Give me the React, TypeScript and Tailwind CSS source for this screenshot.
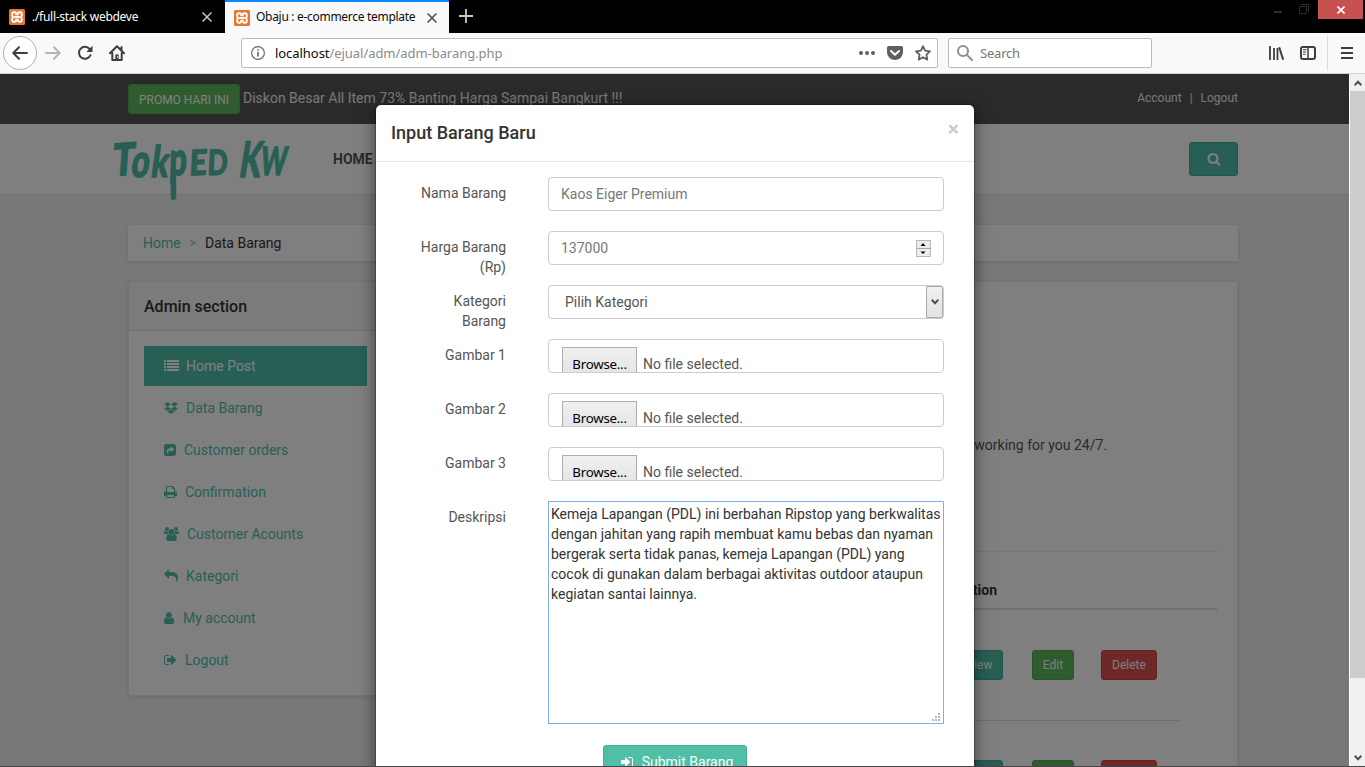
import React from "react";
import { FaDropbox } from "react-icons/fa";

function Glyph({ d, flip, className }: { d: string; flip?: boolean; className?: string }) {
  return (
    <svg viewBox="0 0 1792 1792" className={className ?? "h-3.5 w-3.5"} fill="currentColor">
      <path d={d} transform={flip ? "translate(1792 0) scale(-1 1)" : undefined} />
    </svg>
  );
}

const USER =
  "M1280 1399q0 109-62.5 187t-150.5 78h-854q-88 0-150.5-78t-62.5-187q0-85 8.5-160.5t31.5-152 58.5-131 94-89 134.5-34.5q131 128 313 128t313-128q76 0 134.5 34.5t94 89 58.5 131 31.5 152 8.5 160.5zm-256-887q0 159-112.5 271.5t-271.5 112.5-271.5-112.5-112.5-271.5 112.5-271.5 271.5-112.5 271.5 112.5 112.5 271.5z";
const SEARCH =
  "M1216 832q0-185-131.5-316.5t-316.5-131.5-316.5 131.5-131.5 316.5 131.5 316.5 316.5 131.5 316.5-131.5 131.5-316.5zm512 832q0 52-38 90t-90 38q-54 0-90-38l-343-342q-179 124-399 124-143 0-273.5-55.5t-225-150-150-225-55.5-273.5 55.5-273.5 150-225 225-150 273.5-55.5 273.5 55.5 225 150 150 225 55.5 273.5q0 220-124 399l343 343q37 37 37 90z";
const FORWARD =
  "M1792 640q0 26-19 45l-512 512q-19 19-45 19t-45-19-19-45v-256h-224q-98 0-175.5 6t-154 21.5-133 42.5-105.5 69.5-80 101-48.5 138.5-17.5 181q0 55 5 123 0 6 2.5 23.5t2.5 26.5q0 15-8.5 25t-23.5 10q-16 0-28-17-7-9-13-22t-13.5-30-10.5-24q-127-285-127-451 0-199 53-333 162-403 875-403h224v-256q0-26 19-45t45-19 45 19l512 512q19 19 19 45z";
const SIGN_OUT =
  "M640 1440q0 4 1 20t.5 26.5-3 23.5-10 19.5-20.5 6.5h-320q-119 0-203.5-84.5t-84.5-203.5v-704q0-119 84.5-203.5t203.5-84.5h320q13 0 22.5 9.5t9.5 22.5q0 4 1 20t.5 26.5-3 23.5-10 19.5-20.5 6.5h-320q-66 0-113 47t-47 113v704q0 66 47 113t113 47h312l11.5 1 11.5 3 8 5.5 7 9 2 13.5zm928-544q0 26-19 45l-544 544q-19 19-45 19t-45-19-19-45v-288h-448q-26 0-45-19t-19-45v-384q0-26 19-45t45-19h448v-288q0-26 19-45t45-19 45 19l544 544q19 19 19 45z";
const SIGN_IN =
  "M1312 896q0 26-19 45l-544 544q-19 19-45 19t-45-19-19-45v-288h-448q-26 0-45-19t-19-45v-384q0-26 19-45t45-19h448v-288q0-26 19-45t45-19 45 19l544 544q19 19 19 45zm352-352v704q0 119-84.5 203.5t-203.5 84.5h-320q-13 0-22.5-9.5t-9.5-22.5q0-4-1-20t-.5-26.5 3-23.5 10-19.5 20.5-6.5h320q66 0 113-47t47-113v-704q0-66-47-113t-113-47h-312l-11.5-1-11.5-3-8-5.5-7-9-2-13.5q0-4-1-20t-.5-26.5 3-23.5 10-19.5 20.5-6.5h320q119 0 203.5 84.5t84.5 203.5z";
const PRINT =
  "M384 1536h896v-256h-896v256zm0-640h896v-384h-160q-40 0-68-28t-28-68v-160h-640v640zm1152 64q0-26-19-45t-45-19-45 19-19 45 19 45 45 19 45-19 19-45zm128 0v416q0 13-9.5 22.5t-22.5 9.5h-224v160q0 40-28 68t-68 28h-960q-40 0-68-28t-28-68v-160h-224q-13 0-22.500-9.500t-9.500-22.500v-416q0-79 56.500-135.500t135.500-56.500h64v-544q0-40 28-68t68-28h672q40 0 88 20t76 48l152 152q28 28 48 76t20 88v256h64q79 0 135.500 56.500t56.500 135.500z";

function ListIcon() {
  return (
    <svg viewBox="0 0 15 14" className="h-3.5 w-[15px]" fill="currentColor" shapeRendering="crispEdges">
      {[1, 4, 7, 10].map((y) => (
        <g key={y}>
          <rect x="0" y={y} width="2" height="2" />
          <rect x="3" y={y} width="12" height="2" />
        </g>
      ))}
    </svg>
  );
}

function ShareSquare() {
  return (
    <svg viewBox="0 0 12 12" className="h-3 w-3">
      <rect width="12" height="12" rx="2.3" fill="currentColor" />
      <path d="M6.8 2.2 10.4 5.2 6.8 8.2V6.5C4.6 6.4 3.7 7.4 4.3 10.2 1.9 7.6 2.5 4 6.8 3.9Z" fill="#fff" />
    </svg>
  );
}

function GroupIcon() {
  return (
    <svg viewBox="0 0 15 14" className="h-3.5 w-[15px]" fill="currentColor">
      <circle cx="3" cy="2" r="2" />
      <circle cx="12" cy="2" r="2" />
      <path d="M0 6.2C0 4.7.5 4 1.2 4.1c1 .7 2 .7 3 .2-.2 1 .1 1.9.6 2.7H1.5C.6 7 0 6.8 0 6.2ZM15 6.2c0-1.500-.5-2.200-1.200-2.100-1 .7-2 .7-3 .2.2 1-.1 1.900-.6 2.700h3.300c.9 0 1.500-.2 1.500-.8Z" />
      <circle cx="7.5" cy="4.900" r="2.900" />
      <path d="M2.200 11.500c0-2.500.8-4.200 2.500-4.200 1.700 1.500 3.900 1.500 5.600 0 1.700 0 2.500 1.700 2.500 4.200 0 1.700-.8 2.500-2 2.500H4.200c-1.200 0-2-.8-2-2.500Z" />
    </svg>
  );
}

function Favicon() {
  return (
    <svg viewBox="0 0 16 16" className="h-4 w-4 shrink-0">
      <rect width="16" height="16" rx="1.500" fill="#e8762c" />
      <g fill="none" stroke="#fff" strokeWidth="1.900">
        <path d="M7.200 6.300V4.700c0-.9-.5-1.400-1.400-1.400H4.600c-.9 0-1.400.5-1.400 1.400v1.600c0 .9.6 1.600 1.400 1.700-.8.1-1.400.8-1.400 1.700v1.600c0 .9.5 1.400 1.400 1.400h1.200c.9 0 1.400-.5 1.400-1.400V9.700" />
        <path d="M8.800 6.300V4.700c0-.9.5-1.400 1.400-1.400h1.200c.9 0 1.400.5 1.400 1.400v1.600c0 .9-.6 1.600-1.400 1.700.8.1 1.400.8 1.400 1.700v1.600c0 .9-.5 1.400-1.400 1.400h-1.200c-.9 0-1.400-.5-1.400-1.400V9.700" />
        <path d="M5 8h6" />
      </g>
    </svg>
  );
}

function Cross({ color }: { color: string }) {
  return (
    <svg viewBox="0 0 10 10" className="h-2.5 w-2.5 shrink-0" stroke={color} strokeWidth="1.500">
      <path d="M.5.5l9 9M9.500.5l-9 9" />
    </svg>
  );
}

function TabStrip() {
  return (
    <div className="flex h-[33px] shrink-0 bg-black text-[12px] font-['Noto_Sans','Open_Sans',sans-serif]">
      <div className="flex w-[225px] items-center pl-[9px] pr-[13px] text-white">
        <Favicon />
        <span className="ml-[7px] grow whitespace-nowrap tracking-[-0.28px]">./full-stack webdeve</span>
        <Cross color="#c8c8c8" />
      </div>
      <div className="flex w-[224px] items-center border-t-2 border-[#0a84ff] bg-[#f9f9fa] pl-[9px] pr-3 text-[#0c0c0d]">
        <Favicon />
        <span className="-mt-0.5 ml-1.5 grow whitespace-nowrap tracking-[-0.3px]">Obaju : e-commerce template</span>
        <Cross color="#4a4a4f" />
      </div>
      <svg viewBox="0 0 14 14" className="ml-[10px] mt-[9px] h-3.5 w-3.5" stroke="#c8c8c8" strokeWidth="1.800">
        <path d="M7 0v14M0 7h14" />
      </svg>
      <div className="ml-auto flex items-start pr-0.5">
        <svg viewBox="0 0 40 19" className="mr-[6px] h-[19px] w-10" fill="none" stroke="#2c2c2c">
          <path d="M2 12h8" strokeWidth="2" />
          <path d="M27.500 6.500h7v7h-7zM29 4.500h7.500v7.500" />
        </svg>
        <div className="flex h-[19px] w-[45px] items-center justify-center bg-[#c75050]">
          <svg viewBox="0 0 8 8" className="h-2 w-2" stroke="#fff" strokeWidth="1.600">
            <path d="M.5.5l7 7M7.500.5l-7 7" />
          </svg>
        </div>
      </div>
    </div>
  );
}

function Toolbar() {
  return (
    <div className="flex h-[41px] shrink-0 items-center border-b border-[#d2d2d3] bg-[#f9f9fa] pb-px font-['Noto_Sans','Open_Sans',sans-serif] text-[13px] text-[#4a4a4f]">
      <div className="ml-[3px] flex h-[34px] w-[34px] items-center justify-center rounded-full border border-[#b1b1b1] bg-white">
        <svg viewBox="0 0 16 16" className="h-4 w-4" fill="none" stroke="#3d3d42" strokeWidth="2" strokeLinecap="round" strokeLinejoin="round">
          <path d="M15 8H1.500M7 2.200 1.300 8 7 13.800" />
        </svg>
      </div>
      <svg viewBox="0 0 16 16" className="ml-2 h-4 w-4" fill="none" stroke="#b5b5b7" strokeWidth="2" strokeLinecap="round" strokeLinejoin="round">
        <path d="M1 8h13.500M9 2.200 14.700 8 9 13.800" />
      </svg>
      <svg viewBox="0 0 16 16" className="ml-4 h-4 w-4" fill="none" stroke="#3d3d42" strokeWidth="2">
        <path d="M13.500 10.200A6 6 0 1 1 12.600 4" strokeLinecap="round" />
        <path d="M15.500.8V7H9.300z" fill="#3d3d42" stroke="none" />
      </svg>
      <svg viewBox="0 0 16 16" className="ml-4 h-4 w-4" fill="none" stroke="#3d3d42" strokeWidth="2" strokeLinejoin="round" strokeLinecap="round">
        <path d="M1 8.200 8 1.300l7 6.900M3.300 8v7h9.400V8M12.500 2v2.500" />
        <path d="M6.300 15V9.500h3.400V15z" fill="#3d3d42" stroke="none" />
        <path d="M8.600 11.500v1.200" stroke="#fff" strokeWidth=".8" />
      </svg>
      <div className="ml-[116px] flex h-[30px] w-[697px] items-center rounded-[2px] border border-[#bcbcbd] bg-white pl-[9px] pr-[6px]">
        <svg viewBox="0 0 14 14" className="h-3.5 w-3.5" fill="none" stroke="#6a6a6d">
          <circle cx="7" cy="7" r="6.400" strokeWidth="1.200" />
          <path d="M7 6v4.500M7 3.300v1.500" strokeWidth="1.700" />
        </svg>
        <span className="ml-[10px] grow whitespace-nowrap pt-[3px] tracking-[-0.05px] text-[#8a8a8c]">
          <span className="text-[#0c0c0d]">localhost</span>/ejual/adm/adm-barang.php
        </span>
        <svg viewBox="0 0 16 4" className="h-1 w-4" fill="#5f5f63">
          <circle cx="2" cy="2" r="2" />
          <circle cx="8" cy="2" r="2" />
          <circle cx="14" cy="2" r="2" />
        </svg>
        <svg viewBox="0 0 16 14" className="ml-3 h-3.5 w-4">
          <path d="M1.500 0h13Q16 0 16 1.500V6a8 8 0 0 1-16 0V1.500Q0 0 1.500 0Z" fill="#5f5f63" />
          <path d="m4 5 4 3.800L12 5" fill="none" stroke="#fff" strokeWidth="2" strokeLinecap="round" strokeLinejoin="round" />
        </svg>
        <svg viewBox="0 0 16 16" className="ml-3 h-4 w-4" fill="none" stroke="#5f5f63" strokeWidth="1.800" strokeLinejoin="round">
          <path d="m8 1.200 2.100 4.500 4.900.6-3.600 3.400.9 4.900L8 12.200l-4.300 2.400.9-4.900L1 6.300l4.900-.6z" />
        </svg>
      </div>
      <div className="ml-[10px] flex h-[30px] w-[204px] items-center rounded-[2px] border border-[#bcbcbd] bg-white pl-2">
        <svg viewBox="0 0 16 16" className="h-4 w-4" fill="none" stroke="#8f8f91" strokeWidth="2" strokeLinecap="round">
          <circle cx="6" cy="6" r="5" />
          <path d="m10 10 5 5" />
        </svg>
        <span className="ml-[7px] pt-[3px] tracking-[-0.2px] text-[#767678]">Search</span>
      </div>
      <svg viewBox="0 0 16 14" className="ml-auto h-3.5 w-4" stroke="#3d3d42" strokeWidth="2" fill="none">
        <path d="M1 0v14M5 2v12M8.500 2v12" strokeWidth="1.800" />
        <path d="m10.200 1.300 4 12.400" />
      </svg>
      <svg viewBox="0 0 16 14" className="ml-[15px] h-3.5 w-4" fill="none" stroke="#3d3d42">
        <rect x="1" y="1" width="14" height="12" rx="2" strokeWidth="2" />
        <path d="M8 1v12" strokeWidth="1.500" />
        <path d="M3 3.700h3.500M3 6h3M3 8.300h2.500" />
      </svg>
      <div className="ml-[11px] h-[34px] w-px bg-[#dcdcdd]" />
      <svg viewBox="0 0 12 12" className="ml-[13px] mr-3 h-3 w-3" stroke="#3d3d42" strokeWidth="2">
        <path d="M0 1h12M0 6h12M0 11h12" />
      </svg>
    </div>
  );
}

function Logo() {
  return (
    <svg viewBox="0 -14 180 90" className="-ml-[18px] h-[90px] w-[180px] shrink-0 overflow-visible font-['Lato','Open_Sans',sans-serif]" fill="#50bfa8" stroke="#50bfa8" strokeWidth="1.300" strokeLinejoin="round" strokeLinecap="round" fontWeight="900" fontSize="40">
      <text transform="translate(2 38) rotate(-4) skewX(-8) scale(.92 1.1)">T</text>
      <text transform="translate(20 38.500) skewX(-8) scale(.78 1.150)">o</text>
      <text transform="translate(40 38.500) skewX(-8) scale(.78 1.080)">k</text>
      <text transform="translate(59 37) skewX(-2) scale(.76 1.150)">p</text>
      <path d="M63.500 40 63.500 59.500" strokeWidth="5.500" />
      <text transform="translate(79 37.500) rotate(-3) skewX(-6) scale(.76 .88)">E</text>
      <text transform="translate(97 37) skewX(-3) scale(.66 .88)">D</text>
      <text transform="translate(128 39) skewX(-9) scale(.76 1.220)">K</text>
      <text transform="translate(149 36.500) skewX(-8) scale(.62 .98)">W</text>
    </svg>
  );
}

const MENU = [
  { label: "Home Post", icon: <ListIcon />, gap: "gap-[7px]" },
  { label: "Data Barang", icon: <FaDropbox className="h-3.5 w-3.5" />, gap: "gap-2" },
  { label: "Customer orders", icon: <ShareSquare />, gap: "gap-2" },
  { label: "Confirmation", icon: <Glyph d={PRINT} />, gap: "gap-[7px]" },
  { label: "Customer Acounts", icon: <GroupIcon />, gap: "gap-2" },
  { label: "Kategori", icon: <Glyph d={FORWARD} flip />, gap: "gap-2" },
  { label: "My account", icon: <Glyph d={USER} />, gap: "gap-[5px]" },
  { label: "Logout", icon: <Glyph d={SIGN_OUT} />, gap: "gap-[7px]" },
];

function ActionButtons() {
  return (
    <div className="flex h-[30px] text-[12px] leading-[18px] text-white">
      <span className="w-[47px] rounded-[3px] border border-[#41af98] bg-[#4fbfa8] py-[5px] text-center">View</span>
      <span className="ml-[29px] w-[42px] rounded-[3px] border border-[#4cae4c] bg-[#5cb85c] py-[5px] text-center">Edit</span>
      <span className="ml-[27px] w-[56px] rounded-[3px] border border-[#d43f3a] bg-[#d9534f] py-[5px] text-center">Delete</span>
    </div>
  );
}

function Site() {
  return (
    <div className="flex h-full flex-col bg-[#f0f0f0]">
      <div className="h-[50px] shrink-0 bg-[#555]">
        <div className="mx-auto flex w-[1110px] pt-[10px] text-[#eee]">
          <span className="h-[30px] w-28 rounded-[3px] border border-[#4cae4c] bg-[#5cb85c] pt-[6px] text-center text-[12px] leading-[18px] text-white">PROMO HARI INI</span>
          <span className="ml-[3px] grow pt-1">Diskon Besar All Item 73% Banting Harga Sampai Bangkurt !!!</span>
          <span className="flex gap-2 pt-1 text-[12px]">
            <span>Account</span>
            <span>|</span>
            <span>Logout</span>
          </span>
        </div>
      </div>
      <div className="h-[71px] shrink-0 border-b border-[#e0e0e0] bg-white">
        <div className="mx-auto flex w-[1110px] items-start">
          <Logo />
          <span className="ml-[43px] pt-[25px] font-bold text-[#555]">HOME</span>
          <span className="ml-auto mt-[18px] flex h-[34px] w-[49px] items-center justify-center rounded-[3px] border border-[#41af98] bg-[#4fbfa8] text-white">
            <Glyph d={SEARCH} />
          </span>
        </div>
      </div>
      <div className="mx-auto flex w-[1110px] flex-col">
        <div className="mt-[30px] flex h-9 items-center bg-white px-[15px] shadow-[0_1px_5px_rgba(0,0,0,0.1)]">
          <span className="text-[#4fbfa8]">Home</span>
          <span className="ml-[9px] mr-[9px] text-[12px] text-[#aaa]">&gt;</span>
          <span className="text-[#333]">Data Barang</span>
        </div>
        <div className="mt-5 flex items-start justify-between">
          <div className="w-[255px] rounded-[3px] border border-[#e6e6e6] bg-white pb-[15px] shadow-[0_1px_5px_rgba(0,0,0,0.1)]">
            <div className="flex h-[49px] items-center border-b border-[#ddd] bg-[#f7f7f7] px-[15px] pt-0.5 text-[16px] font-medium text-[#333]">Admin section</div>
            <div className="flex flex-col gap-0.5 pl-[15px] pr-[15px] pt-[15px]">
              {MENU.map((m, i) => (
                <div key={m.label} className={`flex h-10 items-center pl-5 ${m.gap} ${i === 0 ? "bg-[#4fbfa8] text-white" : "text-[#4fbfa8]"}`}>
                  {m.icon}
                  <span>{m.label}</span>
                </div>
              ))}
            </div>
          </div>
          <div className="h-[520px] w-[825px] border border-[#e6e6e6] bg-white px-5 shadow-[0_1px_5px_rgba(0,0,0,0.1)]">
            <div className="flex h-[270px] items-end justify-end border-b border-[#eee] pb-[96px] pr-[110px] text-[#555]">working for you 24/7.</div>
            <div className="flex h-[58px] justify-end border-b-2 border-[#ddd] pr-[220px] pt-7 font-bold text-[#333]">Action</div>
            <div className="mr-[38px] flex h-[111px] items-center justify-end border-b border-[#ddd] pr-[22px]">
              <ActionButtons />
            </div>
            <div className="flex justify-end pr-[60px] pt-[39px]">
              <ActionButtons />
            </div>
          </div>
        </div>
      </div>
    </div>
  );
}

function Row({ label, children }: { label: string; children: React.ReactNode }) {
  return (
    <div className="flex h-[54px] items-start">
      <span className="w-[115px] shrink-0 pl-5 pt-[6px] text-right">{label}</span>
      <div className="ml-[42px] w-[396px]">{children}</div>
    </div>
  );
}

function FileField() {
  return (
    <div className="flex h-[34px] items-start overflow-hidden rounded-[4px] border border-[#ccc] pl-[13px] pt-[7px]">
      <span className="h-9 w-[75px] shrink-0 border border-[#adadad] bg-linear-to-b from-[#f0f0f0] to-[#e1e1e1] pt-[6px] text-center font-['Noto_Sans','Open_Sans',sans-serif] text-[13.3px] tracking-[-0.25px] text-black">Browse...</span>
      <span className="ml-1.5 pt-[7px]">No file selected.</span>
    </div>
  );
}

function Modal() {
  return (
    <div className="absolute left-[375px] top-[30px] z-20 h-[760px] w-[600px] rounded-[6px] border border-black/20 bg-white bg-clip-padding text-[#555] shadow-[0_5px_15px_rgba(0,0,0,0.5)]">
      <div className="flex h-[57px] justify-between border-b border-[#e5e5e5] px-[15px]">
        <span className="pt-[18px] text-[18px] font-medium leading-5 text-[#333]">Input Barang Baru</span>
        <span className="pt-[14px] text-[21px] font-bold leading-[21px] text-[#ccc]">×</span>
      </div>
      <div className="px-[15px] pt-[15px]">
        <Row label="Nama Barang">
          <div className="h-[34px] rounded-[4px] border border-[#ccc] px-3 py-[6px] text-[#777]">Kaos Eiger Premium</div>
        </Row>
        <Row label="Harga Barang (Rp)">
          <div className="flex h-[34px] items-center justify-between rounded-[4px] border border-[#ccc] pl-3 pr-3 text-[#777]">
            <span>137000</span>
            <svg viewBox="0 0 15 17" className="h-[17px] w-[15px]">
              <rect x=".5" y=".5" width="14" height="16" fill="#ececec" stroke="#b8b8b8" />
              <path d="M0 8.500h15" stroke="#a8a8a8" />
              <path d="M4.500 6h5L7 3zM4.500 11.500h5L7 14z" fill="#000" />
            </svg>
          </div>
        </Row>
        <Row label="Kategori Barang">
          <div className="flex h-[34px] justify-between rounded-[4px] border border-[#ccc] pl-4">
            <span className="pt-[6px]">Pilih Kategori</span>
            <span className="flex w-[17px] items-center justify-center rounded-r-[2px] border border-[#ababab] bg-linear-to-b from-[#f0f0f0] to-[#e3e3e3]">
              <svg viewBox="0 0 8 6" className="h-1.5 w-2" fill="none" stroke="#505050" strokeWidth="2">
                <path d="m.7.8 3.300 3.400L7.300.8" />
              </svg>
            </span>
          </div>
        </Row>
        <Row label="Gambar 1"><FileField /></Row>
        <Row label="Gambar 2"><FileField /></Row>
        <Row label="Gambar 3"><FileField /></Row>
        <div className="flex items-start">
          <span className="w-[115px] shrink-0 pt-[6px] text-right">Deskripsi</span>
          <div className="relative ml-[42px] h-[223px] w-[396px] border border-[#7eb1e6] px-0.5 pt-0.5 text-[#333]">
            Kemeja Lapangan (PDL) ini berbahan Ripstop yang berkwalitas
            <br />
            dengan jahitan yang rapih membuat kamu bebas dan nyaman
            <br />
            bergerak serta tidak panas, kemeja Lapangan (PDL) yang
            <br />
            cocok di gunakan dalam berbagai aktivitas outdoor ataupun
            <br />
            kegiatan santai lainnya.
            <svg viewBox="0 0 8 8" className="absolute bottom-0.5 right-[3px] h-2 w-2" fill="#b8b8b8">
              <path d="M6 0h2v2H6zM3 3h2v2H3zM6 3h2v2H6zM0 6h2v2H0zM3 6h2v2H3zM6 6h2v2H6z" />
            </svg>
          </div>
        </div>
        <div className="ml-[212px] mt-[21px] flex h-[34px] w-36 items-center justify-center gap-2 rounded-[3px] border border-[#41af98] bg-[#4fbfa8] pl-[3px] text-white">
          <Glyph d={SIGN_IN} />
          <span>Submit Barang</span>
        </div>
      </div>
    </div>
  );
}

function ScrollBar() {
  return (
    <div className="flex w-4 shrink-0 flex-col border-l border-white bg-[#f0f0f0]">
      <div className="flex h-[17px] items-center justify-center">
        <svg viewBox="0 0 8 6" className="h-1.5 w-2" fill="none" stroke="#505050" strokeWidth="2">
          <path d="M.7 5.200 4 1.800l3.300 3.400" />
        </svg>
      </div>
      <div className="h-[587px] bg-[#cdcdcd]" />
      <div className="mt-auto flex h-[17px] items-center justify-center">
        <svg viewBox="0 0 8 6" className="h-1.5 w-2" fill="none" stroke="#505050" strokeWidth="2">
          <path d="m.7.8 3.300 3.400L7.300.8" />
        </svg>
      </div>
    </div>
  );
}

export default function App() {
  return (
    <div className="flex h-[767px] w-[1365px] flex-col overflow-hidden">
      <TabStrip />
      <Toolbar />
      <div className="flex h-[692px] shrink-0 font-['Roboto',sans-serif] text-[14px] leading-5">
        <div className="relative w-[1349px] shrink-0 overflow-hidden">
          <div className="h-full w-[1366px]">
            <Site />
          </div>
          <div className="absolute inset-0 z-10 bg-black/50" />
          <Modal />
        </div>
        <ScrollBar />
      </div>
      <div className="h-px shrink-0 bg-[#454345]" />
    </div>
  );
}
